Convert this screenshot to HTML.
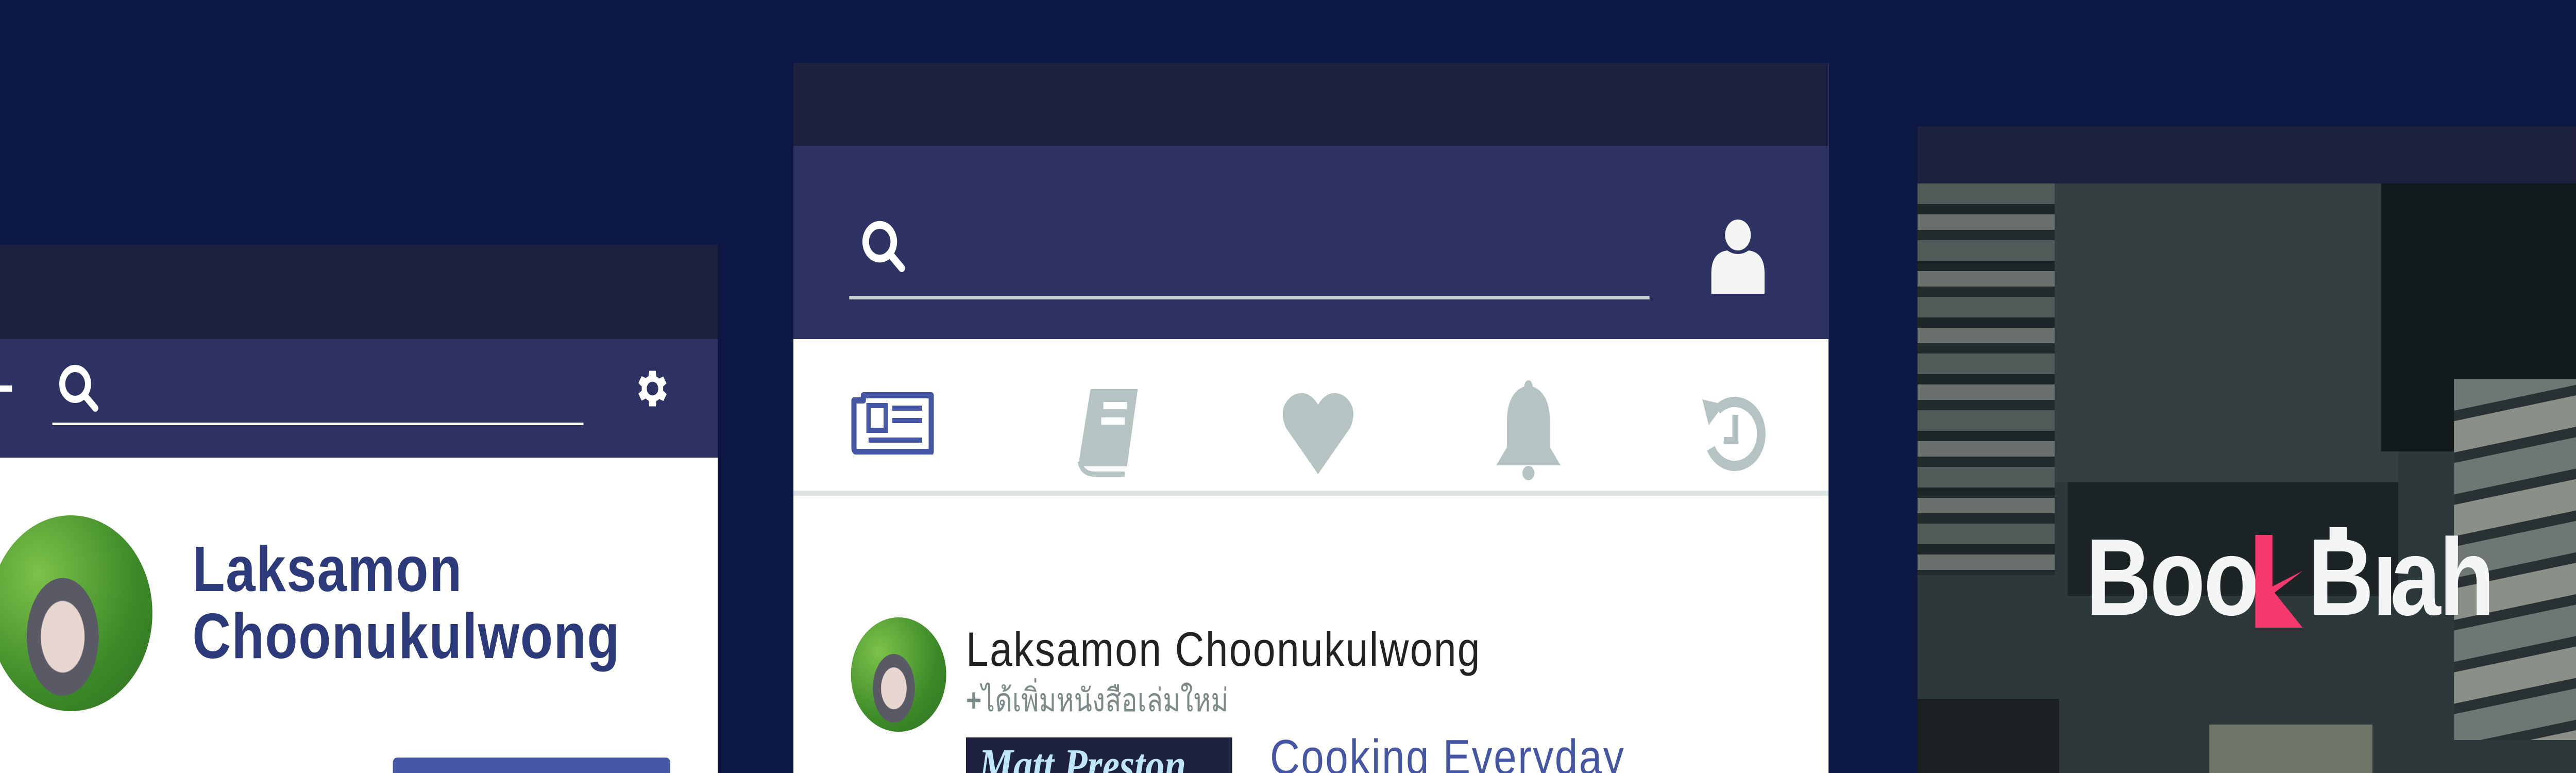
<!DOCTYPE html>
<html><head><meta charset="utf-8"><style>
*{margin:0;padding:0;box-sizing:border-box}
html,body{width:100%;height:100%;overflow:hidden}
body{background:#0c1744;font-family:"Liberation Sans","Noto Sans CJK SC",sans-serif}
#w{position:relative;width:6000px;height:1500px;overflow:hidden;transform:scale(0.833333,1);transform-origin:0 0}
.a{position:absolute}
</style></head><body><div id="w">
<div class="a" style="left:0;top:475px;width:1672px;height:1025px;overflow:hidden">
<div class="a" style="left:0;top:0;width:1672px;height:183px;background:#1e203f"></div>
<div class="a" style="left:0;top:183px;width:1672px;height:230px;background:#2e3263"></div>
<div class="a" style="left:0;top:413px;width:1672px;height:612px;background:#fff"></div>
<div class="a" style="left:0;top:273px;width:28px;height:12px;background:#fff"></div>
<svg class="a" style="left:130px;top:225px" width="110" height="110" viewBox="0 0 110 110"><circle cx="45" cy="45" r="30" fill="none" stroke="#fff" stroke-width="14"/><line x1="68" y1="68" x2="92" y2="92" stroke="#fff" stroke-width="14" stroke-linecap="round"/></svg>
<div class="a" style="left:122px;top:345px;width:1237px;height:5px;background:#fff"></div>
<svg class="a" style="left:1470px;top:233px" width="92" height="92" viewBox="0 0 24 24"><path fill="#fff" d="M19.4 13a7.5 7.5 0 000-2l2.1-1.6-2-3.5-2.5 1a7.6 7.6 0 00-1.7-1L15 3h-4l-.4 2.7a7.6 7.6 0 00-1.7 1l-2.5-1-2 3.5L6.5 11a7.5 7.5 0 000 2l-2.1 1.6 2 3.5 2.5-1a7.6 7.6 0 001.7 1L11 21h4l.4-2.7a7.6 7.6 0 001.7-1l2.5 1 2-3.5zM13 15.5a3.5 3.5 0 110-7 3.5 3.5 0 010 7z"/></svg>
<div class="a" style="left:-25px;top:525px;width:380px;height:380px;border-radius:50%;background:radial-gradient(ellipse 22% 30% at 45% 62%,#e8d6d0 0 60%,#5a5a66 62% 100%,transparent 100%),radial-gradient(circle at 30% 30%,#7cc24a,#3d8a28 60%,#2f6f22)"></div>
<div class="a" style="left:448px;top:565px;font-size:124px;line-height:130px;color:#2c3a7a;font-weight:bold;letter-spacing:2px;white-space:nowrap">Laksamon<br>Choonukulwong</div>
<div class="a" style="left:915px;top:995px;width:646px;height:60px;border-radius:10px;background:#4556a5"></div>
</div>

<div class="a" style="left:1848px;top:122px;width:2411px;height:1378px;overflow:hidden;background:#fff">
<div class="a" style="left:0;top:0;width:2411px;height:161px;background:#1e203f"></div>
<div class="a" style="left:0;top:161px;width:2411px;height:375px;background:#2e3263"></div>
<svg class="a" style="left:152px;top:298px" width="120" height="120" viewBox="0 0 110 110"><circle cx="45" cy="45" r="30" fill="none" stroke="#fff" stroke-width="14"/><line x1="68" y1="68" x2="92" y2="92" stroke="#fff" stroke-width="14" stroke-linecap="round"/></svg>
<div class="a" style="left:130px;top:452px;width:1864px;height:7px;background:#c9cfcc"></div>
<svg class="a" style="left:2130px;top:298px" width="140" height="150" viewBox="0 0 140 150"><circle cx="70" cy="36" r="30" fill="#f4f6f6"/><path d="M8 150V110Q8 70 45 66Q70 80 95 66Q132 70 132 110V150Z" fill="#f4f6f6"/></svg>
<svg class="a" style="left:135px;top:635px" width="195" height="125" viewBox="0 0 195 125"><path d="M6 20V112Q6 120 14 120H186V10H28V20Z" fill="none" stroke="#4556a5" stroke-width="12" stroke-linejoin="round"/><rect x="40" y="30" width="40" height="48" fill="none" stroke="#4556a5" stroke-width="10"/><rect x="95" y="30" width="70" height="10" fill="#4556a5"/><rect x="95" y="54" width="70" height="10" fill="#4556a5"/><rect x="40" y="92" width="125" height="10" fill="#4556a5"/></svg>
<svg class="a" style="left:652px;top:633px" width="160" height="170" viewBox="0 0 160 170"><path d="M40 0H150L125 150H30Q10 150 15 130Z" fill="#b6c3c3"/><path d="M15 140Q20 165 50 165H120" fill="none" stroke="#b6c3c3" stroke-width="10"/><rect x="70" y="25" width="55" height="14" fill="#fff"/><rect x="65" y="55" width="55" height="14" fill="#fff"/></svg>
<svg class="a" style="left:1137px;top:638px" width="170" height="160" viewBox="0 0 170 160"><path d="M85 160L10 70Q-10 30 25 8Q60 -8 85 25Q110 -8 145 8Q180 30 160 70Z" fill="#b6c3c3"/></svg>
<svg class="a" style="left:1632px;top:616px" width="160" height="200" viewBox="0 0 160 200"><path d="M80 0Q88 0 90 12Q130 25 130 80V130L155 165H5L30 130V80Q30 25 70 12Q72 0 80 0Z" fill="#b6c3c3"/><circle cx="80" cy="180" r="14" fill="#b6c3c3"/></svg>
<svg class="a" style="left:2112px;top:638px" width="160" height="160" viewBox="0 0 160 160"><path d="M40 35A62 62 0 1 1 25 110" fill="none" stroke="#b6c3c3" stroke-width="20"/><path d="M5 15L55 25L20 65Z" fill="#b6c3c3"/><path d="M82 45V95H55" fill="none" stroke="#b6c3c3" stroke-width="14"/></svg>
<div class="a" style="left:0;top:830px;width:2411px;height:10px;background:#dde3e3"></div>
<div class="a" style="left:134px;top:1076px;width:222px;height:222px;border-radius:50%;background:radial-gradient(ellipse 22% 30% at 45% 62%,#e8d6d0 0 60%,#5a5a66 62% 100%,transparent 100%),radial-gradient(circle at 30% 30%,#7cc24a,#3d8a28 60%,#2f6f22)"></div>
<div class="a" style="left:402px;top:1083px;font-size:94px;line-height:110px;color:#222;letter-spacing:3px;white-space:nowrap">Laksamon Choonukulwong</div>
<div class="a" style="left:402px;top:1198px;font-size:62px;line-height:80px;color:#7d8a8a;white-space:nowrap"><b>+</b>ได้เพิ่มหนังสือเล่มใหม่</div>
<div class="a" style="left:402px;top:1309px;width:620px;height:80px;background:#1e203f;overflow:hidden"><div style="font:italic bold 90px 'Liberation Serif',serif;color:#bfe6f5;margin-left:30px;line-height:110px;white-space:nowrap">Matt Preston</div></div>
<div class="a" style="left:1110px;top:1293px;font-size:96px;line-height:110px;color:#4556a5;letter-spacing:3px;white-space:nowrap">Cooking Everyday</div>
</div>

<div class="a" style="left:4466px;top:245px;width:1534px;height:1255px;overflow:hidden">
<div class="a" style="left:0;top:0;width:1534px;height:111px;background:#1e203f"></div>
<div class="a" style="left:0;top:111px;width:1534px;height:1144px;background:#2d383b;overflow:hidden">
 <div class="a" style="left:0;top:0;width:320px;height:760px;background:repeating-linear-gradient(180deg,#515a58 0 40px,#1e2526 40px 60px,#6a706c 60px 90px,#232a2c 90px 110px)"></div>
 <div class="a" style="left:320px;top:0;width:800px;height:580px;background:#343f42"></div>
 <div class="a" style="left:350px;top:580px;width:770px;height:220px;background:#1c2425"></div>
 <div class="a" style="left:1080px;top:0;width:454px;height:520px;background:#121a1b"></div>
 <div class="a" style="left:1250px;top:380px;width:284px;height:700px;background:repeating-linear-gradient(170deg,#6f7774 0 60px,#2a3133 60px 80px,#8a8f88 80px 140px,#2a3133 140px 160px)"></div>
 <div class="a" style="left:0;top:1000px;width:330px;height:144px;background:#1a2022"></div>
 <div class="a" style="left:680px;top:1050px;width:380px;height:94px;background:#6f7468"></div>
</div>
<div class="a" style="left:392px;top:765px;font-size:212px;line-height:220px;font-weight:bold;color:#f4f6f6;letter-spacing:-4px;white-space:nowrap">Boo<span style="display:inline-block;width:118px"></span>B<span style="display:inline-block;width:42px">ı</span>ah</div>
<svg class="a" style="left:787px;top:793px" width="110" height="180" viewBox="0 0 110 180"><path d="M0 0H40V100L110 70L45 112L110 180H0Z" fill="#f5386e"/></svg>
<div class="a" style="left:960px;top:778px;width:40px;height:35px;background:#f4f6f6"></div>
</div>
</div></body></html>
